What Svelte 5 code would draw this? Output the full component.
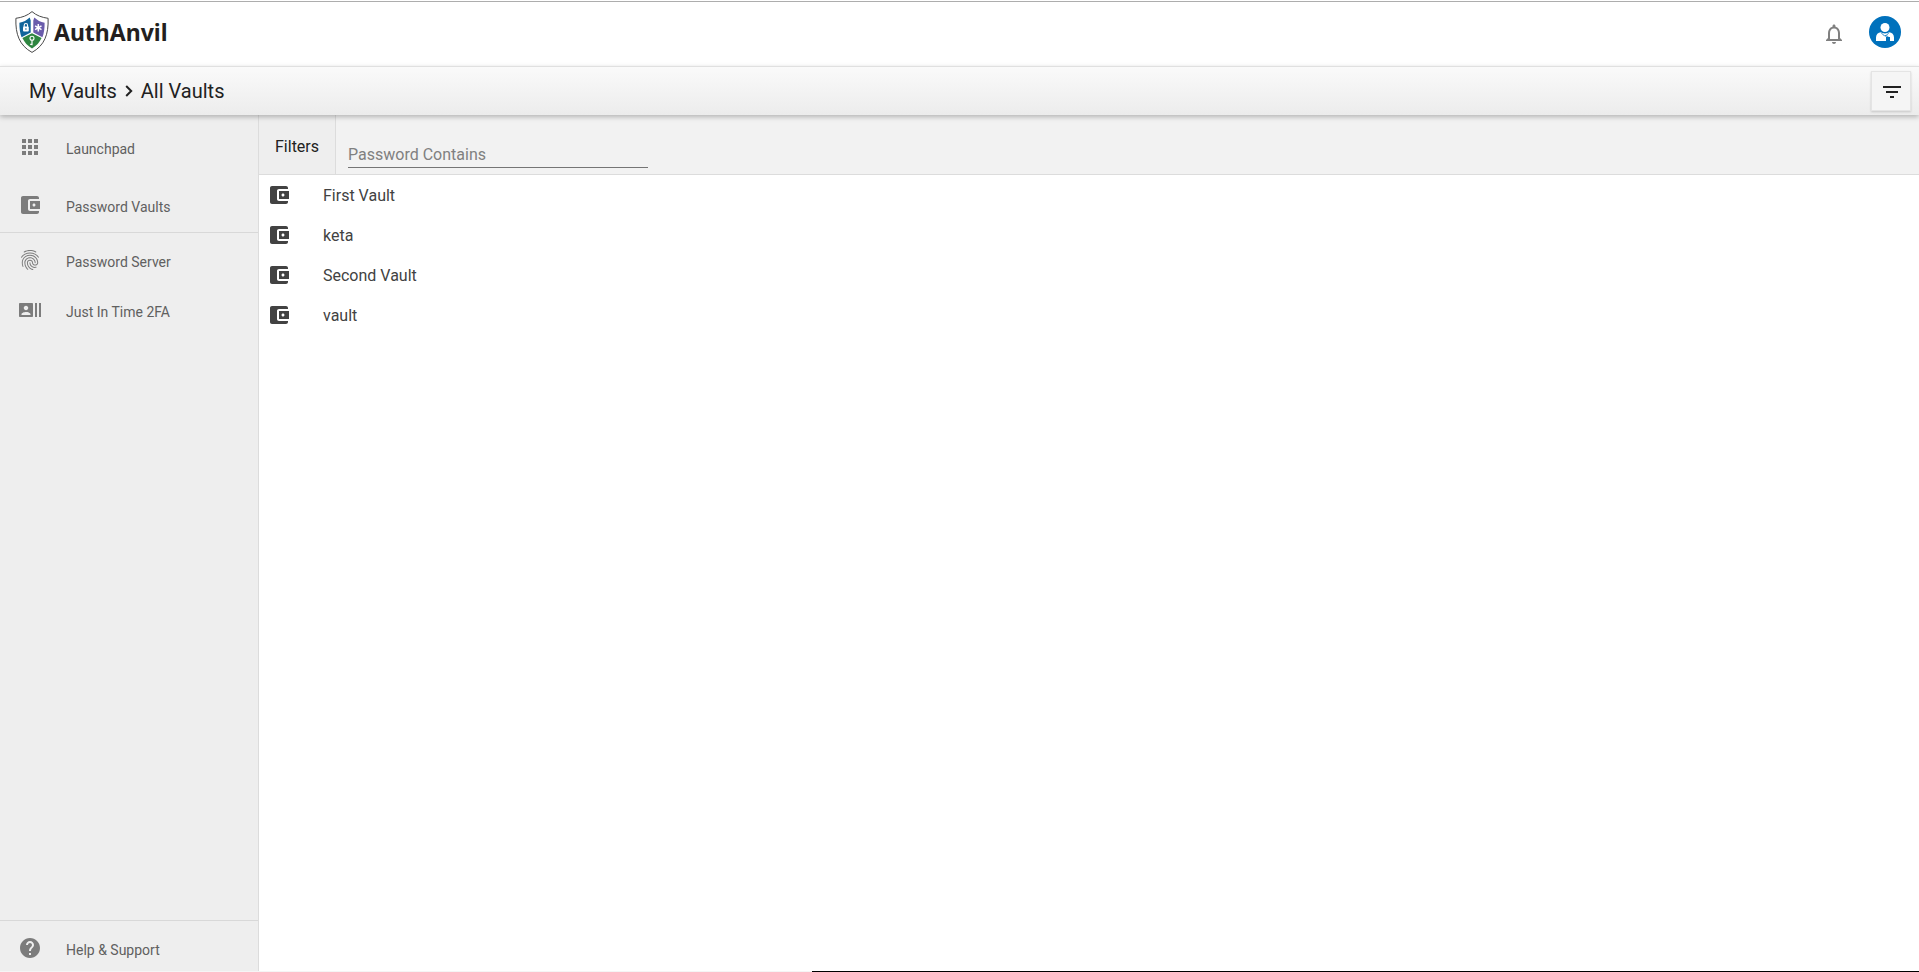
<script lang="ts">
  type IconName = 'apps' | 'wallet' | 'fingerprint' | 'contacts' | 'help';
  type NavItem = { label: string; icon: IconName };

  const icons: Record<IconName, string> = {
    apps: 'M4 8h4V4H4v4zm6 12h4v-4h-4v4zm-6 0h4v-4H4v4zm0-6h4v-4H4v4zm6 0h4v-4h-4v4zm6-10v4h4V4h-4zm-6 4h4V4h-4v4zm6 6h4v-4h-4v4zm0 6h4v-4h-4v4z',
    wallet: 'M21 18v1c0 1.1-.9 2-2 2H5c-1.11 0-2-.9-2-2V5c0-1.1.89-2 2-2h14c1.1 0 2 .9 2 2v1h-9c-1.11 0-2 .9-2 2v8c0 1.1.89 2 2 2h9zm-9-2h10V8H12v8zm4-2.5c-.83 0-1.5-.67-1.5-1.5s.67-1.5 1.5-1.5 1.5.67 1.5 1.5-.67 1.5-1.5 1.5z',
    fingerprint: 'M17.81 4.47c-.08 0-.16-.02-.23-.06C15.66 3.42 14 3 12.01 3c-1.98 0-3.86.47-5.57 1.41-.24.13-.54.04-.68-.2-.13-.24-.04-.55.2-.68C7.82 2.52 9.86 2 12.01 2c2.13 0 3.99.47 6.03 1.52.25.13.34.43.21.67-.09.18-.26.28-.44.28zM3.5 9.72c-.1 0-.2-.03-.29-.09-.23-.16-.28-.47-.12-.7.99-1.4 2.25-2.5 3.75-3.27C9.98 4.04 14 4.03 17.15 5.65c1.5.77 2.76 1.86 3.75 3.25.16.22.11.54-.12.7-.23.16-.54.11-.7-.12-.9-1.26-2.04-2.25-3.39-2.94-2.87-1.47-6.54-1.47-9.4.01-1.36.7-2.5 1.7-3.4 2.96-.08.14-.23.21-.39.21zm6.25 12.07c-.13 0-.26-.05-.35-.15-.87-.87-1.34-1.43-2.01-2.64-.69-1.23-1.05-2.73-1.05-4.34 0-2.97 2.54-5.39 5.66-5.39s5.66 2.42 5.66 5.39c0 .28-.22.5-.5.5s-.5-.22-.5-.5c0-2.42-2.09-4.39-4.66-4.39-2.57 0-4.66 1.97-4.66 4.39 0 1.44.32 2.77.93 3.85.64 1.15 1.08 1.64 1.85 2.42.19.2.19.51 0 .71-.11.1-.24.15-.37.15zm7.17-1.85c-1.19 0-2.24-.3-3.1-.89-1.49-1.01-2.38-2.65-2.38-4.39 0-.28.22-.5.5-.5s.5.22.5.5c0 1.41.72 2.74 1.94 3.56.71.48 1.54.71 2.54.71.24 0 .64-.03 1.04-.1.27-.05.53.13.58.41.05.27-.13.53-.41.58-.57.11-1.07.12-1.21.12zM14.91 22c-.04 0-.09-.01-.13-.02-1.59-.44-2.63-1.03-3.72-2.1-1.4-1.39-2.17-3.24-2.17-5.22 0-1.62 1.38-2.94 3.08-2.94 1.7 0 3.08 1.32 3.08 2.94 0 1.07.93 1.94 2.08 1.94s2.08-.87 2.08-1.94c0-3.77-3.25-6.83-7.25-6.83-2.84 0-5.44 1.58-6.61 4.03-.39.81-.59 1.76-.59 2.8 0 .78.07 2.01.67 3.61.1.26-.03.55-.29.64-.26.1-.55-.04-.64-.29-.49-1.31-.73-2.61-.73-3.96 0-1.2.23-2.29.68-3.24 1.33-2.79 4.28-4.6 7.51-4.6 4.55 0 8.25 3.51 8.25 7.83 0 1.62-1.38 2.94-3.08 2.94s-3.08-1.32-3.08-2.94c0-1.07-.93-1.94-2.08-1.94s-2.08.87-2.08 1.94c0 1.71.66 3.31 1.87 4.51.95.94 1.86 1.46 3.27 1.85.27.07.42.35.35.61-.05.23-.26.38-.47.38z',
    contacts: 'M21 5v14h2V5h-2zm-4 14h2V5h-2v14zM14 5H2c-.55 0-1 .45-1 1v12c0 .55.45 1 1 1h12c.55 0 1-.45 1-1V6c0-.55-.45-1-1-1zM8 7.75c1.24 0 2.25 1.01 2.25 2.25S9.24 12.25 8 12.25 5.75 11.24 5.75 10 6.76 7.75 8 7.75zM12.5 17h-9v-.75c0-1.5 3-2.25 4.5-2.25s4.5.75 4.5 2.25V17z',
    help: 'M12 2C6.48 2 2 6.48 2 12s4.48 10 10 10 10-4.48 10-10S17.52 2 12 2zm1 17h-2v-2h2v2zm2.07-7.75l-.9.92C13.45 12.9 13 13.5 13 15h-2v-.5c0-1.1.45-2.1 1.17-2.83l1.24-1.26c.37-.36.59-.86.59-1.41 0-1.1-.9-2-2-2s-2 .9-2 2H8c0-2.21 1.79-4 4-4s4 1.79 4 4c0 .88-.36 1.68-.93 2.25z'
  };

  const mainNav: NavItem[] = [
    { label: 'Launchpad', icon: 'apps' },
    { label: 'Password Vaults', icon: 'wallet' }
  ];

  const serverNav: NavItem[] = [
    { label: 'Password Server', icon: 'fingerprint' },
    { label: 'Just In Time 2FA', icon: 'contacts' }
  ];

  const helpNav: NavItem[] = [{ label: 'Help & Support', icon: 'help' }];

  const vaults = ['First Vault', 'keta', 'Second Vault', 'vault'];

  let showFilters = $state(true);
  let query = $state('');
</script>

{#snippet icon(name: IconName)}
  <svg class="icon" viewBox="0 0 24 24" aria-hidden="true"><path d={icons[name]} /></svg>
{/snippet}

{#snippet navGroup(items: NavItem[], className: string)}
  <ul class="nav {className}">
    {#each items as item (item.label)}
      <li>
        <a href="#top">
          {@render icon(item.icon)}
          <span>{item.label}</span>
        </a>
      </li>
    {/each}
  </ul>
{/snippet}

<div class="app">
  <header class="header">
    <a class="brand" href="#top">
      <svg class="shield" viewBox="0 0 34 42" aria-hidden="true">
        <path class="outline" d="M17 .6C12.500 4.600 7 6.500.9 7.300c-.6 16 3.600 27.200 16.100 34.100 12.500-6.900 16.700-18.100 16.100-34.100C27 6.500 21.500 4.600 17 .6z" />
        <path fill="#11659b" d="M14.700 6.500l1 3v12.100L6.600 26.300C5 22.200 4.300 17.300 4.400 11.700c3.900-.6 7.500-2.500 10.300-5.200z" />
        <path fill="#6a5cab" d="M19.300 6.500l-1 3v12.100l9.100 4.700c1.600-4.100 2.300-9 2.200-14.600-3.900-.6-7.500-2.500-10.300-5.200z" />
        <path fill="#2e8540" d="M17 22.200l9.600 4.900c-2.100 4.300-5.100 7.900-9.600 10.400-4.500-2.500-7.500-6.100-9.600-10.400z" />
        <rect x="8" y="15.600" width="5.800" height="4.800" rx="1" fill="#fff" />
        <path d="M9.200 16v-1.600a1.700 1.900 0 0 1 3.400 0V16" fill="none" stroke="#fff" stroke-width="1.100" />
        <circle cx="10.900" cy="18" r=".8" fill="#11659b" />
        <path d="M23.300 13v7.400M20.100 14.800l6.400 3.800M20.100 18.600l6.400-3.800" stroke="#fff" stroke-width="1.500" />
        <circle cx="17" cy="27.300" r="2" fill="none" stroke="#fff" stroke-width="1.100" />
        <path d="M17 29.300v4.900M17 33.400h-1.800" fill="none" stroke="#fff" stroke-width="1.200" />
      </svg>
      <span>AuthAnvil</span>
    </a>
    <div class="account">
      <button class="bell" aria-label="Notifications">
        <svg class="icon" viewBox="0 0 24 24" aria-hidden="true">
          <path d="M12 22c1.100 0 2-.9 2-2h-4c0 1.100.9 2 2 2zm6-6v-5c0-3.070-1.630-5.640-4.500-6.320V4c0-.830-.670-1.500-1.500-1.500s-1.500.670-1.500 1.500v.680C7.640 5.360 6 7.920 6 11v5l-2 2v1h16v-1l-2-2zm-2 1H8v-6c0-2.480 1.510-4.500 4-4.500s4 2.020 4 4.500v6z" />
        </svg>
      </button>
      <button class="avatar" aria-label="Account">
        <svg viewBox="0 0 32 32" aria-hidden="true">
          <circle cx="16" cy="16" r="16" fill="#0071bc" />
          <circle cx="16" cy="11.500" r="4.500" fill="#fff" />
          <path fill="#fff" d="M7 25v-3.500c0-3 2-5 5-5.200 1.400 1.500 6.600 1.500 8 0 3 .2 5 2.200 5 5.200V25z" />
          <path d="M12.500 17c1.500 2.800 4.500 3.200 6.800 3.400M19.500 17c-.8 1.600-2 2.400-3.500 2.900" fill="none" stroke="#0071bc" stroke-width=".8" />
          <path fill="#0071bc" d="M17 21h4v4h-4z" />
        </svg>
      </button>
    </div>
  </header>

  <div class="toolbar">
    <nav class="crumbs" aria-label="Breadcrumb">
      <a href="#top">My Vaults</a>
      <svg viewBox="0 0 8 12" aria-hidden="true"><path d="M1.200 1l5 5-5 5" /></svg>
      <span>All Vaults</span>
    </nav>
    <button class="filter-toggle" aria-label="Toggle filters" onclick={() => (showFilters = !showFilters)}>
      <svg class="icon" viewBox="0 0 24 24" aria-hidden="true">
        <path d="M10 18h4v-2h-4v2zM3 6v2h18V6H3zm3 7h12v-2H6v2z" />
      </svg>
    </button>
  </div>

  <div class="body">
    <aside class="sidebar">
      {@render navGroup(mainNav, 'primary')}
      {@render navGroup(serverNav, 'server')}
      {@render navGroup(helpNav, 'support')}
    </aside>

    <main class="content">
      {#if showFilters}
        <div class="filters">
          <div class="filters-title">Filters</div>
          <input type="text" aria-label="Password Contains" placeholder="Password Contains" bind:value={query} />
        </div>
      {/if}
      <ul class="vaults">
        {#each vaults as vault (vault)}
          <li>
            <a href="#top">
              {@render icon('wallet')}
              <span>{vault}</span>
            </a>
          </li>
        {/each}
      </ul>
    </main>
  </div>

  <div class="progress"><div class="bar"></div></div>
</div>

<style>
  :global(body) {
    background: #fff;
  }
  .app {
    display: flex;
    flex-direction: column;
    height: 100vh;
    font-family: Roboto, 'Liberation Sans', sans-serif;
    font-size: 16px;
    color: #212121;
  }
  .app :global(*) {
    box-sizing: border-box;
  }
  a {
    color: inherit;
    text-decoration: none;
  }
  ul {
    list-style: none;
    margin: 0;
    padding: 0;
  }
  button {
    border: 0;
    padding: 0;
    background: none;
    color: inherit;
    cursor: pointer;
  }
  svg {
    display: block;
    flex: none;
  }
  .icon {
    width: 24px;
    height: 24px;
    fill: currentColor;
  }

  .header {
    display: flex;
    align-items: center;
    justify-content: space-between;
    flex: none;
    height: 65px;
    margin-top: 1px;
    padding: 0 18px 4px 15px;
    border-top: 1px solid #adadad;
  }
  .brand {
    display: flex;
    align-items: center;
    gap: 5px;
    font-family: 'Noto Sans', 'Open Sans', sans-serif;
    font-size: 23px;
    line-height: 32px;
    font-weight: 700;
    color: #231f20;
  }
  .shield {
    width: 34px;
    height: 42px;
  }
  .outline {
    fill: #fff;
    stroke: #4a4a4a;
    stroke-width: 1;
  }
  .account {
    display: flex;
    align-items: center;
    gap: 23px;
  }
  .bell {
    padding-top: 4px;
    color: #808080;
  }
  .avatar svg {
    width: 32px;
    height: 32px;
  }

  .toolbar {
    display: flex;
    align-items: center;
    justify-content: space-between;
    flex: none;
    height: 49px;
    padding: 0 8px 0 29px;
    border-top: 1px solid #e0e0e0;
    background: linear-gradient(#fafafa, #ececec);
    box-shadow: 0 2px 5px rgba(0, 0, 0, 0.26);
    z-index: 1;
  }
  .crumbs {
    display: flex;
    align-items: center;
    gap: 8px;
    font-size: 20px;
    line-height: 24px;
  }
  .crumbs svg {
    width: 8px;
    height: 12px;
    fill: none;
    stroke: #212121;
    stroke-width: 2;
  }
  .filter-toggle {
    display: flex;
    align-items: center;
    justify-content: center;
    width: 40px;
    height: 40px;
    padding: 1px 0 0 1px;
    border: 1px solid #e4e4e4;
    background: #f5f5f5;
    box-shadow: 0 1px 2px rgba(0, 0, 0, 0.16);
  }

  .body {
    display: flex;
    flex: 1;
    min-height: 0;
  }
  .sidebar {
    display: flex;
    flex-direction: column;
    flex: none;
    width: 259px;
    border-right: 1px solid #dcdcdc;
    background: #eee;
    font-size: 14px;
    color: #606060;
  }
  .nav {
    display: flex;
    flex-direction: column;
  }
  .nav a {
    display: flex;
    align-items: center;
    gap: 24px;
    height: 50px;
    padding-left: 18px;
  }
  .nav .icon {
    margin-bottom: 4px;
    color: #7c7c7c;
  }
  .primary {
    gap: 8px;
    padding-top: 9px;
    border-bottom: 1px solid #d8d8d8;
  }
  .server {
    padding-top: 4px;
  }
  .support {
    margin-top: auto;
    padding-top: 4px;
    border-top: 1px solid #d8d8d8;
  }
  .support a {
    height: 46px;
    padding-top: 4px;
  }

  .content {
    flex: 1;
    min-width: 0;
    background: #fff;
  }
  .filters {
    display: flex;
    height: 60px;
    border-bottom: 1px solid #dcdcdc;
    background: #f2f2f2;
  }
  .filters-title {
    display: flex;
    align-items: center;
    padding: 4px 16px 0;
    border-right: 1px solid #dcdcdc;
    background: #eee;
  }
  input {
    align-self: flex-end;
    width: 300px;
    height: 26px;
    margin: 0 12px 6px;
    padding: 0;
    border: 0;
    border-bottom: 1px solid #757575;
    outline: none;
    background: none;
    font: inherit;
    color: #212121;
  }
  input::placeholder {
    color: #808080;
    opacity: 1;
  }
  .vaults a {
    display: flex;
    align-items: center;
    gap: 32px;
    height: 40px;
    padding-left: 8px;
    color: #424242;
  }

  .progress {
    flex: none;
    height: 1px;
    background: #f5f5f5;
  }
  .bar {
    height: 1px;
    margin-left: 812px;
    background: #000;
  }
</style>
